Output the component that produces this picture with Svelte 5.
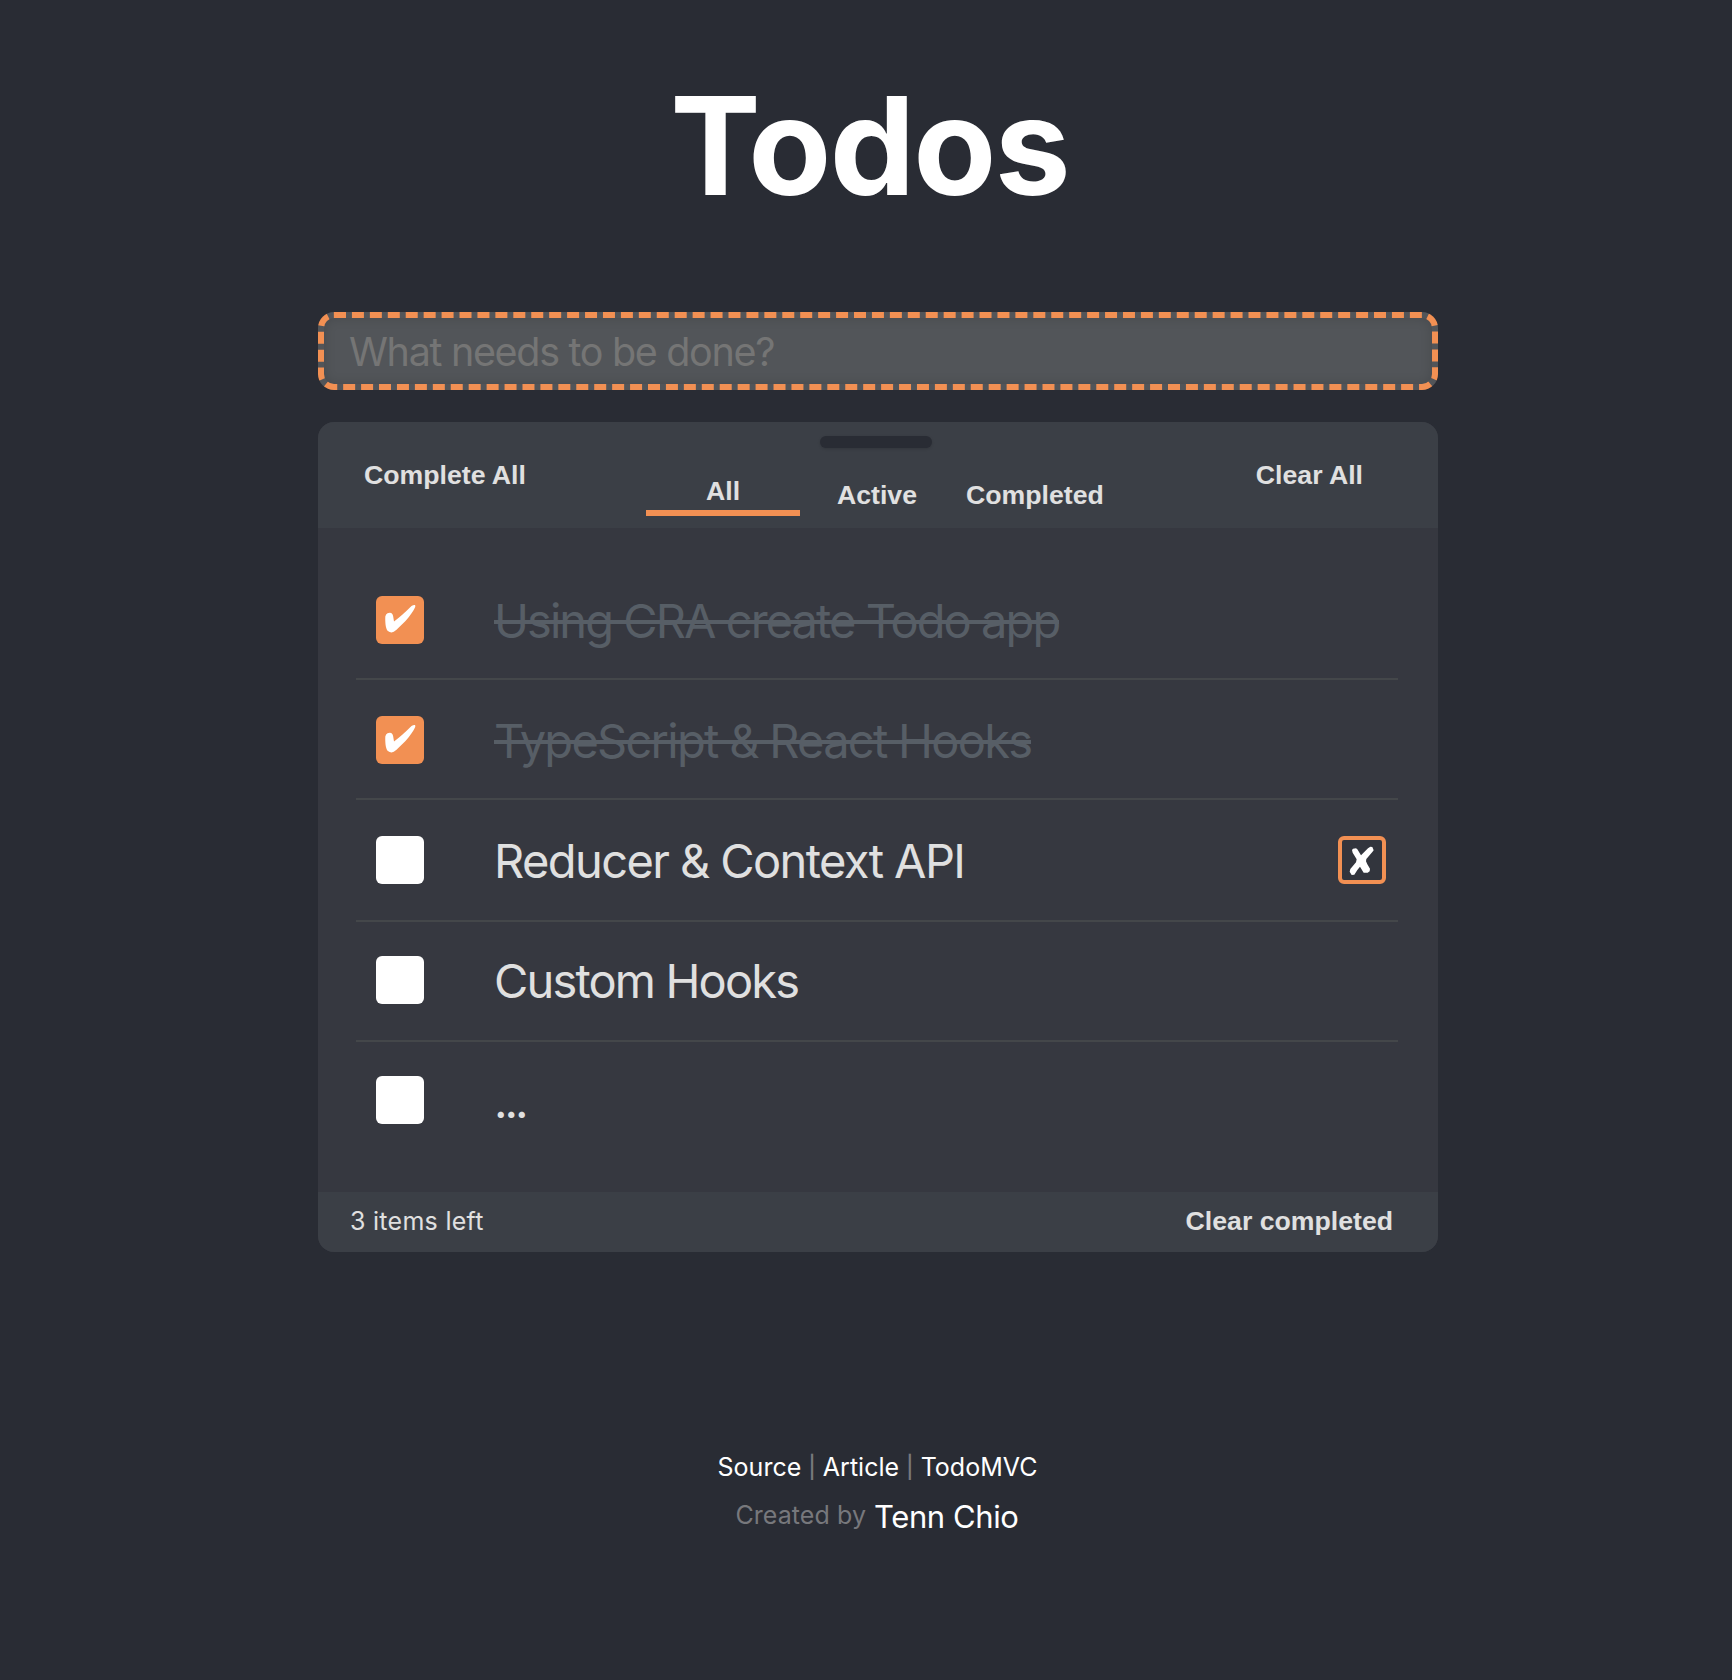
<script>
  let draft = $state('');
  let todos = $state([
    { id: 1, text: 'Using CRA create Todo app', done: true },
    { id: 2, text: 'TypeScript & React Hooks', done: true },
    { id: 3, text: 'Reducer & Context API', done: false, focused: true },
    { id: 4, text: 'Custom Hooks', done: false },
    { id: 5, text: '...', done: false }
  ]);
  const left = $derived(todos.filter((t) => !t.done).length);
</script>

<main class="page">
  <h1>Todos</h1>

  <input class="new-todo" placeholder="What needs to be done?" bind:value={draft} />

  <section class="card">
    <header class="toolbar">
      <button class="text-btn">Complete All</button>
      <div class="middle">
        <div class="handle"></div>
        <nav class="tabs">
          <button class="text-btn tab active">All</button>
          <button class="text-btn tab second">Active</button>
          <button class="text-btn tab third">Completed</button>
        </nav>
      </div>
      <button class="text-btn clear-all">Clear All</button>
    </header>

    <ul class="list">
      {#each todos as todo (todo.id)}
        <li class:done={todo.done}>
          <button class="check" aria-label="Toggle" onclick={() => (todo.done = !todo.done)}>
            {#if todo.done}
              <svg viewBox="0 0 48 48">
                <path d="M9.3 20.5Q9.8 18 11.5 17.2Q13.5 16.4 15.3 17Q17 18 17.2 20.5L18 25.5Q26 19.500 35.500 10Q37.500 8.700 39 9Q39.700 9.800 39.100 11.300C37.500 15 34 20 29.500 25L20.500 33.800Q17.500 36.500 15.300 36.400Q12.800 36.200 11.300 34.500C9.500 31.500 9.100 26 9.300 20.500Z" />
              </svg>
            {/if}
          </button>
          <span class="label"><span class="words">{todo.text}</span></span>
          {#if todo.focused}
            <button class="remove" aria-label="Remove">
              <svg viewBox="0 0 144 144">
                <path d="M42 42L45 38L54 37L58 40L69 58L90 37L97 32L103 33L107 43L103 48L85 69L84 76L88 85L96 98L95 106L89 110L77 110L66 92L58 102L49 116L41 117L35 107L37 99L54 79L56 70L44 50Z" />
              </svg>
            </button>
          {/if}
        </li>
      {/each}
    </ul>

    <footer class="summary">
      <span class="count">{left} items left</span>
      <button class="text-btn">Clear completed</button>
    </footer>
  </section>

  <footer class="info">
    <p class="links">
      <a href="#source">Source</a><span class="bar">|</span><a href="#article">Article</a><span class="bar">|</span><a href="#todomvc">TodoMVC</a>
    </p>
    <p class="credit"><span>Created by</span><a class="author" href="#author">Tenn Chio</a></p>
  </footer>
</main>

<style>
  :global(body) {
    margin: 0;
    background: #292c34;
  }

  .page {
    box-sizing: border-box;
    min-height: 1680px;
    padding: 86px 0 0 24px;
    display: flex;
    flex-direction: column;
    align-items: center;
    background: #292c34;
    color: #e0e0e0;
    font-family: Inter, "Liberation Sans", sans-serif;
  }

  h1 {
    margin: 0 0 106px;
    padding-right: 17px;
    font-size: 135.6px;
    font-weight: 700;
    line-height: 120px;
    letter-spacing: -1.8px;
    color: #fff;
  }

  .new-todo {
    box-sizing: border-box;
    width: 1120px;
    height: 78px;
    margin: 0;
    padding: 1px 25px 0;
    border: 6px dashed #f29053;
    border-radius: 16px;
    outline: none;
    background: #525559;
    box-shadow: inset 0 0 12px rgba(0, 0, 0, 0.14);
    font: 400 39.5px Inter, "Liberation Sans", sans-serif;
    letter-spacing: -1.32px;
    color: #e0e0e0;
  }

  .new-todo::placeholder {
    color: #757575;
    opacity: 1;
  }

  .card {
    width: 1120px;
    margin-top: 32px;
    border-radius: 16px;
    overflow: hidden;
    background: #363840;
  }

  .text-btn {
    margin: 0;
    padding: 0;
    border: 0;
    background: none;
    color: #e0e0e0;
    font: 700 26.67px/30px "Liberation Sans", Arial, sans-serif;
    text-align: left;
    white-space: nowrap;
  }

  .toolbar {
    display: grid;
    grid-template-columns: 282px 1fr auto;
    align-items: center;
    height: 106px;
    padding: 0 75px 0 46px;
    box-sizing: border-box;
    background: #3b3f46;
  }

  .middle {
    align-self: start;
    padding-top: 14px;
  }

  .handle {
    width: 112px;
    height: 12px;
    margin-left: 174px;
    border-radius: 6px;
    background: #292c34;
    box-shadow: 0 1px 3px rgba(0, 0, 0, 0.15);
  }

  .tabs {
    display: flex;
    align-items: flex-start;
    margin-top: 28px;
  }

  .tab {
    margin-top: 4px;
  }

  .tab.active {
    width: 154px;
    margin-top: 0;
    padding-bottom: 4px;
    border-bottom: 6px solid #f29053;
    text-align: center;
  }

  .second {
    margin-left: 37px;
  }

  .third {
    margin-left: 49px;
  }

  .list {
    box-sizing: border-box;
    height: 664px;
    margin: 0;
    padding: 32px 40px 0 38px;
    list-style: none;
  }

  li {
    box-sizing: border-box;
    display: flex;
    align-items: flex-start;
    height: 120px;
    padding: 36px 12px 0 20px;
    border-bottom: 2px solid #44474a;
  }

  li:nth-child(3) {
    height: 122px;
  }

  li:nth-child(n + 4) {
    padding-top: 34px;
  }

  li:last-child {
    border-bottom: 0;
  }

  .check,
  .remove {
    box-sizing: border-box;
    flex: none;
    display: block;
    width: 48px;
    height: 48px;
    padding: 0;
    border: 0;
    border-radius: 6px;
    background: #fff;
  }

  .check svg,
  .remove svg {
    display: block;
    width: 48px;
    height: 48px;
    fill: #fff;
  }

  .done .check {
    background: #f29053;
  }

  .remove {
    border: 4px solid #f29053;
    background: #32353d;
  }

  .remove svg {
    margin: -4px;
  }

  .label {
    flex: 1;
    margin-left: 70px;
    padding-top: 1px;
    font-size: 47px;
    font-weight: 400;
    line-height: 48px;
    letter-spacing: -1.6px;
    white-space: nowrap;
  }

  .words {
    display: inline-block;
  }

  li:nth-child(1) .label {
    letter-spacing: -1.94px;
  }

  li:nth-child(2) .label {
    letter-spacing: -1.73px;
  }

  li:nth-child(4) .label {
    letter-spacing: -1.85px;
  }

  li:nth-child(5) .label {
    letter-spacing: -3px;
  }

  /* The strike is a 4px band, drawn at the middle of the lowercase letters. */
  .done .words {
    color: #575e66;
    background: linear-gradient(#575e66, #575e66) 0 23px / 100% 4px no-repeat;
  }

  .summary {
    box-sizing: border-box;
    display: flex;
    align-items: center;
    justify-content: space-between;
    height: 60px;
    padding: 0 45px 2px 32px;
    background: #3b3f46;
  }

  .count {
    font-size: 25px;
    line-height: 30px;
    letter-spacing: 0.28px;
  }

  .info {
    margin-top: 200px;
    font-size: 25px;
    line-height: 30px;
    color: #77787c;
  }

  .info p {
    display: flex;
    justify-content: center;
    margin: 0;
  }

  .info .links {
    padding-right: 1px;
    gap: 7px;
  }

  .bar {
    font-size: 22px;
    font-weight: 500;
  }

  .info .credit {
    margin-top: 18px;
    padding-right: 2px;
    gap: 8px;
  }

  .credit span {
    letter-spacing: 0.08px;
  }

  a {
    color: #fff;
    text-decoration: none;
  }

  .author {
    margin-top: 2px;
    font-size: 31px;
    letter-spacing: -0.4px;
  }
</style>
